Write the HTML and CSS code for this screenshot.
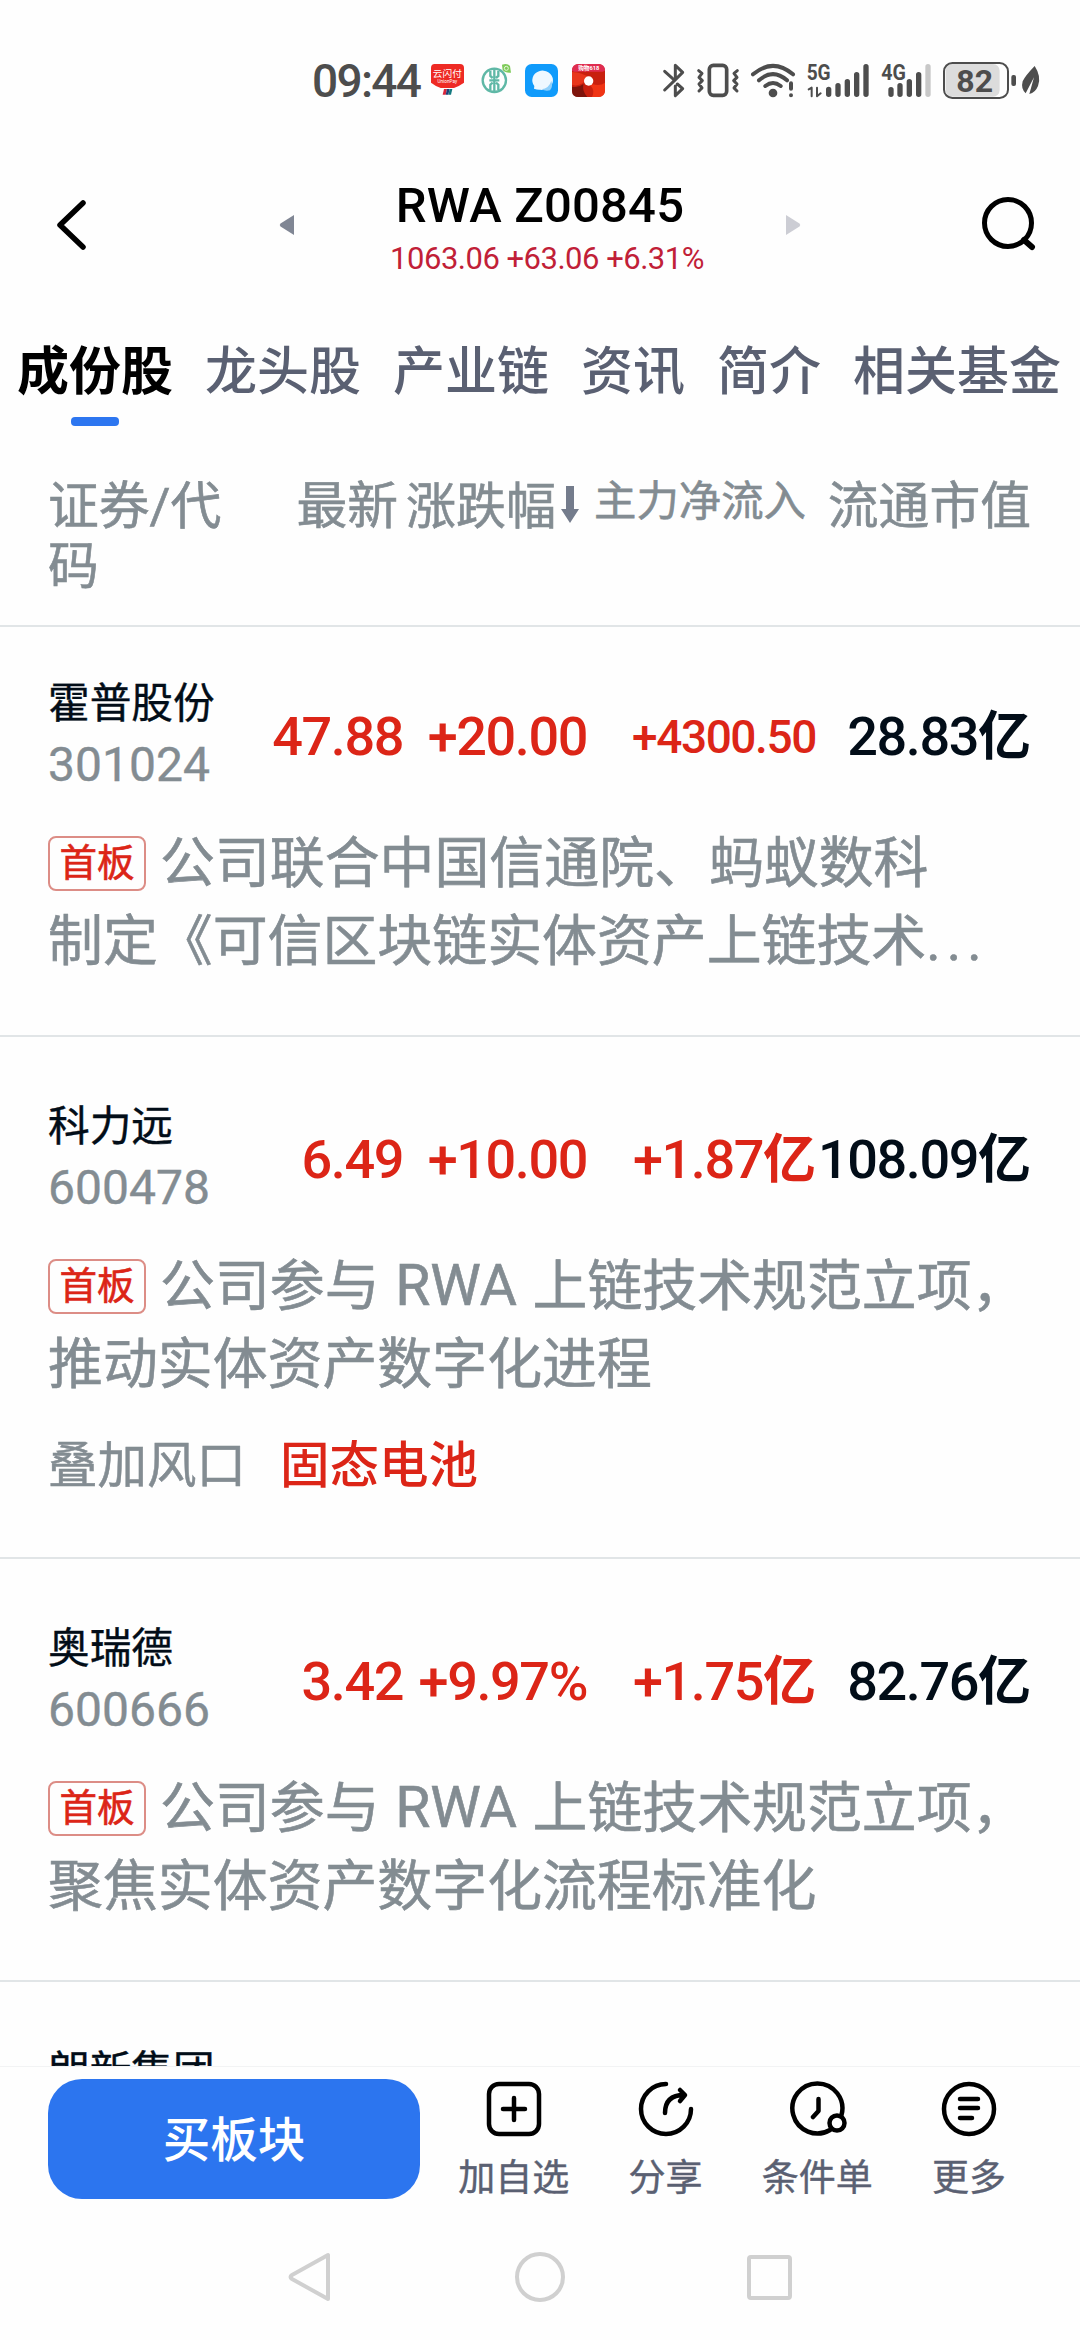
FILE: index.html
```html
<!DOCTYPE html>
<html lang="zh-CN">
<head>
  <meta charset="UTF-8">
  <meta name="viewport" content="width=device-width, initial-scale=1.0">
  <title>RWA Z00845</title>
  <link rel="stylesheet" href="styles.css">
</head>
<body>

  <!-- Status bar -->
  <div class="status-bar">
    <span class="clock">09:44</span>
    <svg class="app-icons" width="176" height="40" viewBox="390 60 528 120">
      <path d="M404 72H480Q492 72 492 84V128Q478 138 462 144H422Q406 138 393 128V84Q393 72 404 72Z" fill="#ee2a24"/>
      <text x="442" y="111" font-size="29" text-anchor="middle" fill="#fff">云闪付</text>
      <text x="442" y="130" font-size="14" text-anchor="middle" fill="#fff">UnionPay</text>
      <path d="M432 147H441L437 164H428Z" fill="#d8253a"/>
      <path d="M441 147H449L445 164H437Z" fill="#1d3f78"/>
      <path d="M449 147H457L453 164H445Z" fill="#147a80"/>
      <circle cx="583" cy="121" r="35" fill="none" stroke="#5fb8a6" stroke-width="7"/>
      <path d="M583 84V158M568 121H598M571 92V108L578 114M595 92V108L588 114M571 150V134L578 128M595 150V134L588 128" fill="none" stroke="#5fb8a6" stroke-width="7"/>
      <path d="M606 74Q622 68 630 78L633 98Q616 100 608 90Z" fill="#7fcb5b"/>
      <circle cx="619" cy="85" r="6" fill="none" stroke="#e8f8dc" stroke-width="3"/>
      <rect x="675" y="72" width="99" height="99" rx="20" fill="#109bfb"/>
      <path d="M702 146L703 138A31 29 0 1 1 721 149Q712 150 702 146Z" fill="#eef8ff"/>
      <path d="M754 122Q760 140 750 151Q736 154 724 148Q748 144 754 122Z" fill="#8fd0fb"/>
      <rect x="816" y="72" width="99" height="99" rx="20" fill="#c8200f"/>
      <path d="M816 96Q850 98 864 112L848 130Q830 140 816 134Z" fill="#e8361c"/>
      <path d="M850 132Q846 154 862 171H836Q816 171 816 152V140Q836 144 850 132Z" fill="#7d140c"/>
      <path d="M876 132Q900 140 915 128V150Q915 171 895 171H876Q886 150 870 136Z" fill="#f03414"/>
      <path d="M836 72H895Q915 72 915 92L908 95H822L816 92Q816 72 836 72Z" fill="#df2c50"/>
      <text x="866" y="90" font-size="17" font-weight="700" text-anchor="middle" fill="#fff">购物618</text>
      <circle cx="866" cy="123" r="14" fill="#fff"/>
    </svg>
    <svg class="sys-icons" width="384" height="40" viewBox="60 60 1152 120">
      <g fill="none" stroke="#4d4d4d" stroke-width="9" stroke-linecap="round" stroke-linejoin="round">
        <!-- bluetooth -->
        <path d="M74 94L104 121L128 97L106 76V110M74 150L104 121M112 132L128 146L106 167V138"/>
        <!-- vibrate -->
        <rect x="208" y="76" width="52" height="90" rx="12" stroke-width="11"/>
        <path d="M176 92L186 100L177 112L187 122L177 132L186 144L177 153M292 92L282 100L291 112L281 122L291 132L282 144L291 153"/>
        <!-- wifi -->
        <path d="M339 103Q399 52 459 103M357 121Q399 84 441 121M376 138Q399 120 422 138" stroke-width="12"/>
        <path d="M453 130V146M453 166V166.1" stroke-width="12"/>
        <!-- 5G -->
        <path d="M506 148L515 143V169M531 143V169L542 160" stroke-width="6"/>
        <path d="M566 148V163M594 137V163M622 125V163M650 104V163M678 80V163" stroke-width="16"/>
        <!-- 4G -->
        <path d="M753 149V163M780 137V163M808 125V163M836 104V163" stroke-width="16"/>
        <path d="M864 80V163" stroke="#c8c8c8" stroke-width="16"/>
      </g>
      <circle cx="399" cy="159" r="13" fill="#4d4d4d"/>
      <text x="500" y="120" font-size="66" font-weight="700" textLength="72" lengthAdjust="spacingAndGlyphs" fill="#4d4d4d">5G</text>
      <text x="724" y="120" font-size="66" font-weight="700" textLength="74" lengthAdjust="spacingAndGlyphs" fill="#4d4d4d">4G</text>
      <!-- battery -->
      <rect x="917" y="72" width="162" height="98" rx="20" fill="#dcdcdc"/>
      <rect x="912" y="69" width="192" height="105" rx="25" fill="none" stroke="#4d4d4d" stroke-width="6"/>
      <rect x="1114" y="105" width="14" height="33" rx="6" fill="#4d4d4d"/>
      <text x="1004" y="156" font-size="96" font-weight="700" text-anchor="middle" fill="#4d4d4d">82</text>
      <path d="M1184 78Q1205 110 1194 138Q1186 158 1168 162L1182 112L1157 160Q1142 146 1148 124Q1155 108 1184 78Z" fill="#4d4d4d"/>
    </svg>
  </div>

  <!-- Title -->
  <header class="header">
    <svg class="back" width="32" height="52" viewBox="0 0 32 52"><path d="M28 4L5 26L28 48" fill="none" stroke="#000" stroke-width="5.5" stroke-linecap="round" stroke-linejoin="round"/></svg>
    <svg class="prev" width="15" height="22" viewBox="0 0 15 22"><path d="M15 1V21L1.500 12.500Q0 11 1.500 9.500Z" fill="#808694"/></svg>
    <div class="title">
      <h1>RWA Z00845</h1>
      <p>1063.06 +63.06 +6.31%</p>
    </div>
    <svg class="next" width="15" height="22" viewBox="0 0 15 22"><path d="M0 1V21L13.500 12.500Q15 11 13.500 9.500Z" fill="#cccdd4"/></svg>
    <svg class="search" width="56" height="56" viewBox="0 0 56 56"><g fill="none" stroke="#000" stroke-width="5"><circle cx="27" cy="26" r="23.500"/><path d="M43 43L51 50" stroke-linecap="round" stroke-width="6"/></g></svg>
  </header>

  <nav class="tabs">
    <span class="tab active">成份股</span>
    <span class="tab">龙头股</span>
    <span class="tab">产业链</span>
    <span class="tab">资讯</span>
    <span class="tab">简介</span>
    <span class="tab">相关基金</span>
  </nav>

  <div class="grid table-head">
    <span class="col-name">证券/代<br>码</span>
    <span class="col-price">最新</span>
    <span class="col-rate">涨跌幅<svg width="18" height="37" viewBox="0 0 18 37"><path d="M5 0H13V23H18L9 37L0 23H5Z" fill="#747c8c"/></svg></span>
    <span class="col-flow">主力净流入</span>
    <span>流通市值</span>
  </div>

  <!-- Stock list -->
  <main class="list">
    <section class="stock first">
      <div class="grid">
        <div class="name">霍普股份<span class="code">301024</span></div>
        <span class="num up">47.88</span>
        <span class="num up">+20.00</span>
        <span class="num up small">+4300.50</span>
        <span class="num">28.83<b>亿</b></span>
      </div>
      <p class="desc"><span class="badge">首板</span>公司联合中国信通院、蚂蚁数科<br>制定《可信区块链实体资产上链技术<span class="dots">...</span></p>
    </section>

    <section class="stock">
      <div class="grid">
        <div class="name">科力远<span class="code">600478</span></div>
        <span class="num up">6.49</span>
        <span class="num up">+10.00</span>
        <span class="num up">+1.87<b>亿</b></span>
        <span class="num">108.09<b>亿</b></span>
      </div>
      <p class="desc"><span class="badge">首板</span>公司参与 <span class="latin">RWA</span> 上链技术规范立项，<br>推动实体资产数字化进程</p>
      <p class="extra">叠加风口<span class="theme">固态电池</span></p>
    </section>

    <section class="stock">
      <div class="grid">
        <div class="name">奥瑞德<span class="code">600666</span></div>
        <span class="num up">3.42</span>
        <span class="num up">+9.97%</span>
        <span class="num up">+1.75<b>亿</b></span>
        <span class="num">82.76<b>亿</b></span>
      </div>
      <p class="desc"><span class="badge">首板</span>公司参与 <span class="latin">RWA</span> 上链技术规范立项，<br>聚焦实体资产数字化流程标准化</p>
    </section>

    <section class="stock">
      <div class="grid">
        <div class="name">朗新集团</div>
      </div>
    </section>
  </main>

  <!-- Bottom actions -->
  <footer class="actions">
    <button class="buy">买板块</button>
    <div class="action">
      <svg width="56" height="56" viewBox="0 0 56 56"><rect x="3" y="3" width="50" height="50" rx="10"/><path d="M28 17V39M17 28H39"/></svg>
      加自选
    </div>
    <div class="action">
      <svg width="56" height="56" viewBox="0 0 56 56"><path d="M28 3A25 25 0 1 0 53 28M27 32Q27 14 46 14M42 9L47 14L42 20"/></svg>
      分享
    </div>
    <div class="action">
      <svg width="60" height="56" viewBox="-2 0 60 56"><path d="M41 49A25 25 0 1 1 52.500 34M29.500 18V30L24 36"/><circle cx="48" cy="42" r="7.500"/></svg>
      条件单
    </div>
    <div class="action">
      <svg width="56" height="56" viewBox="0 0 56 56"><circle cx="28" cy="28" r="25"/><path d="M19 18H37M19 27H37M19 37H31"/></svg>
      更多
    </div>
  </footer>

  <div class="nav-bar">
    <svg width="504" height="52" viewBox="0 0 504 52">
      <g fill="none" stroke="#d0d0d0" stroke-width="4" stroke-linejoin="round">
        <path d="M40 4V48L4 28Q1 26 4 24Z"/>
        <circle cx="252" cy="26" r="23"/>
        <rect x="461" y="6" width="41" height="41" rx="2"/>
      </g>
    </svg>
  </div>

</body>
</html>
```
FILE: styles.css
```css
* {
  box-sizing: border-box;
}

body {
  display: flex;
  flex-direction: column;
  width: 1080px;
  height: 2340px;
  margin: 0;
  overflow: hidden;
  background-color: #fefefe;
  color: #020d18;
  font-family: Roboto, "Noto Sans CJK SC", sans-serif;
}

svg {
  display: block;
  flex: none;
}

h1, p {
  margin: 0;
}

/* Status bar */
.status-bar {
  display: flex;
  align-items: center;
  height: 160px;
  padding-left: 312px;
  color: #4d4d4d;
}

.clock {
  width: 118px;
  padding-top: 2px;
  font-size: 46px;
  font-weight: 500;
  letter-spacing: -1.7px;
  line-height: 40px;
  white-space: nowrap;
}

.sys-icons {
  margin-left: 54px;
}

/* Header */
.header {
  display: flex;
  align-items: center;
  height: 130px;
  padding-left: 55px;
}

.prev {
  margin-left: 192px;
}

.title {
  width: 492px;
  padding-top: 9px;
  text-align: center;
  white-space: nowrap;
}

.title h1 {
  color: #000;
  font-size: 49px;
  font-weight: 500;
  letter-spacing: 0.2px;
  line-height: 56px;
}

.title p {
  padding: 3px 0 0 14px;
  color: #c11f38;
  font-size: 31px;
  letter-spacing: -0.5px;
  line-height: 44px;
}

.search {
  margin-left: 180px;
}

/* Tabs */
.tabs {
  display: flex;
  gap: 32px;
  height: 165px;
  padding: 45px 0 0 17px;
  color: #5a6072;
  font-size: 52px;
  font-weight: 500;
  line-height: 76px;
  white-space: nowrap;
}

.tab.active {
  display: flex;
  flex-direction: column;
  align-items: center;
  color: #000;
  font-weight: 700;
}

.tab.active::after {
  content: "";
  width: 48px;
  height: 9px;
  margin-top: 6px;
  border-radius: 4px;
  background-color: #2d76f0;
}

/* Columns */
.grid {
  display: grid;
  grid-template-columns: 170px 185px 184px 229px 215px;
  justify-items: end;
  padding-left: 48px;
  white-space: nowrap;
}

.table-head {
  flex: none;
  height: 172px;
  padding-top: 22px;
  border-bottom: 2px solid #e1e5e7;
  color: #838c92;
  font-size: 50.8px;
  line-height: 60px;
  -webkit-text-stroke: 0.6px;
}

.col-name {
  justify-self: start;
}

.col-price {
  padding-right: 5px;
}

.col-rate {
  display: flex;
  align-items: flex-start;
  gap: 5px;
  padding-right: 8px;
  font-size: 50px;
}

.col-rate svg {
  margin-top: 9px;
}

.col-flow {
  padding-right: 10px;
  font-size: 42.4px;
  line-height: 50px;
}

/* Stock list */
.list {
  flex: 1;
  min-height: 0;
  overflow: hidden;
}

.stock {
  padding: 60px 0 55px;
  border-bottom: 2px solid #e1e5e7;
}

.stock.first {
  padding-top: 47px;
}

.stock .grid {
  align-items: center;
  height: 126px;
}

.name {
  justify-self: start;
  align-self: start;
  font-size: 41.7px;
  line-height: 60px;
  -webkit-text-stroke: 0.4px;
}

.code {
  display: block;
  color: #838c92;
  font-size: 48px;
  line-height: 62px;
}

.num {
  font-size: 54px;
  font-weight: 500;
  letter-spacing: -1.4px;
  line-height: 60px;
}

.num b {
  font-size: 53px;
  font-weight: 700;
  letter-spacing: 0;
}

.up {
  color: #dc2517;
}

.small {
  font-size: 46px;
}

.desc {
  padding: 24px 0 0 48px;
  color: #838c92;
  font-size: 54.9px;
  line-height: 78px;
  white-space: nowrap;
  -webkit-text-stroke: 0.6px;
}

.badge {
  display: inline-block;
  width: 98px;
  height: 55px;
  margin-right: 14px;
  border: 2px solid #dc8d86;
  border-radius: 8px;
  color: #dc2517;
  font-size: 37.5px;
  line-height: 50px;
  text-align: center;
  vertical-align: 6px;
}

.latin {
  margin: 0 2px;
  font-size: 57px;
  line-height: 60px;
}

.dots {
  letter-spacing: 6px;
}

.extra {
  padding: 27px 0 0 48px;
  color: #838c92;
  font-size: 49.5px;
  line-height: 72px;
  -webkit-text-stroke: 0.5px;
}

.theme {
  margin-left: 34px;
  color: #dc2517;
  font-weight: 500;
  -webkit-text-stroke: 0;
}

/* Bottom actions */
.actions {
  display: flex;
  flex: none;
  height: 146px;
  padding: 12px 0 0 48px;
  border-top: 1px solid #f2f3f4;
}

.buy {
  width: 372px;
  height: 120px;
  margin-right: 18px;
  padding: 0 0 5px;
  border: none;
  border-radius: 34px;
  background-color: #2c75ef;
  color: #fff;
  font-family: inherit;
  font-size: 47.5px;
  font-weight: 500;
}

.action {
  display: flex;
  flex-direction: column;
  align-items: center;
  gap: 16px;
  width: 151.7px;
  padding-top: 2px;
  color: #5a6072;
  font-size: 37px;
  line-height: 52px;
  -webkit-text-stroke: 0.4px;
}

.action svg {
  fill: none;
  stroke: #000;
  stroke-width: 4.5px;
  stroke-linecap: round;
  stroke-linejoin: round;
}

/* System navigation */
.nav-bar {
  display: flex;
  flex: none;
  justify-content: center;
  height: 128px;
  padding-top: 39px;
}
```
